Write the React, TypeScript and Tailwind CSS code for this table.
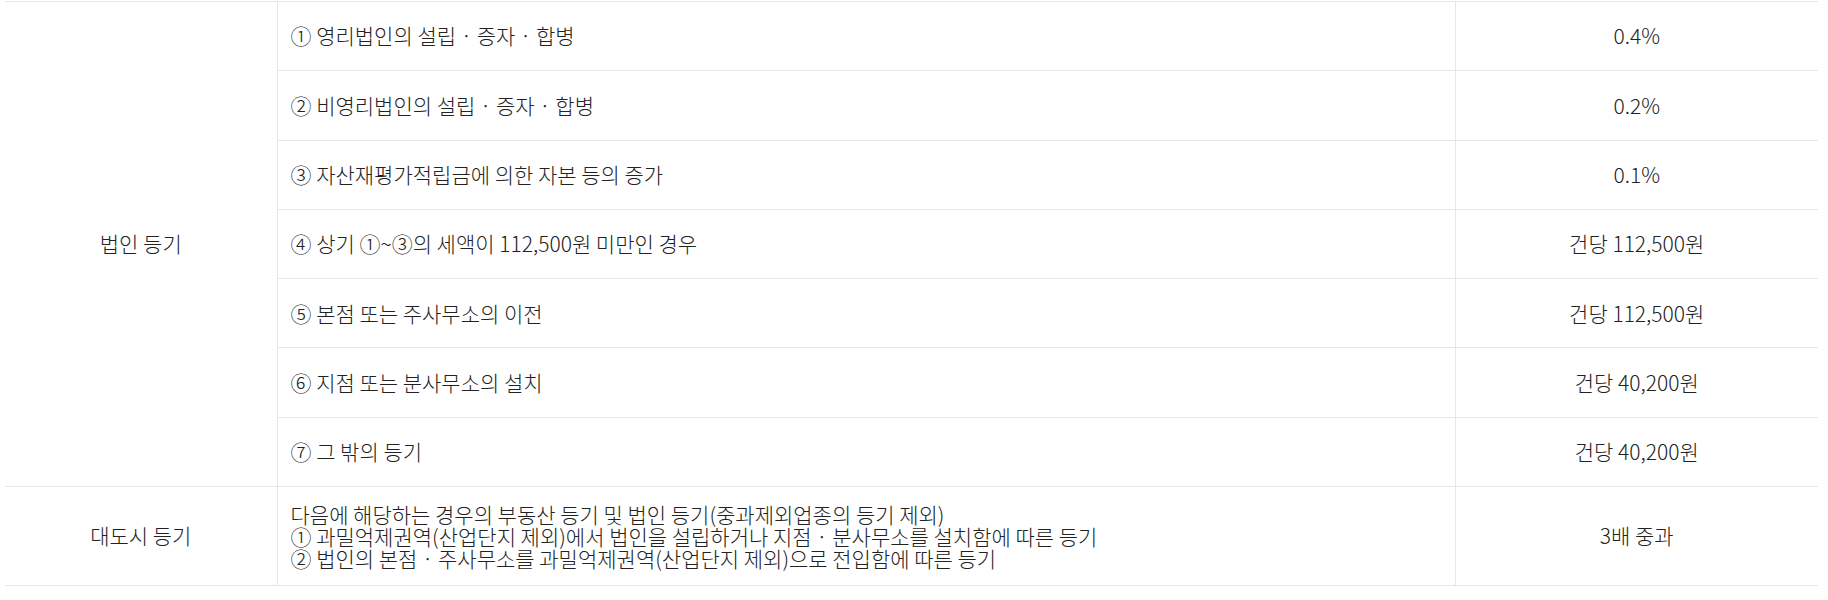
const rows = [
  { item: '① 영리법인의 설립 · 증자 · 합병', rate: '0.4%' },
  { item: '② 비영리법인의 설립 · 증자 · 합병', rate: '0.2%' },
  { item: '③ 자산재평가적립금에 의한 자본 등의 증가', rate: '0.1%' },
  { item: '④ 상기 ①~③의 세액이 112,500원 미만인 경우', rate: '건당 112,500원' },
  { item: '⑤ 본점 또는 주사무소의 이전', rate: '건당 112,500원' },
  { item: '⑥ 지점 또는 분사무소의 설치', rate: '건당 40,200원' },
  { item: '⑦ 그 밖의 등기', rate: '건당 40,200원' },
]

const cell = 'border-b border-[#e6e6e6]'

export default function App() {
  return (
    <div className="min-h-[600px] bg-white pt-px pl-[5px] font-['Noto_Sans_CJK_KR','Noto_Sans',sans-serif] text-[21px] font-light text-[#222]">
      <table className="w-[1813px] table-fixed border-collapse border-t border-[#e6e6e6]">
        <colgroup>
          <col className="w-[272px]" />
          <col className="w-[1178px]" />
          <col />
        </colgroup>
        <tbody>
          {rows.map((row, i) => (
            <tr key={i} className="h-[69.3px]">
              {i === 0 && (
                <td rowSpan={rows.length} className={`${cell} border-r text-center`}>
                  법인 등기
                </td>
              )}
              <td className={`${cell} border-r px-[13px]`}>{row.item}</td>
              <td className={`${cell} text-center`}>{row.rate}</td>
            </tr>
          ))}
          <tr className="h-[99px]">
            <td className={`${cell} border-r text-center`}>대도시 등기</td>
            <td className={`${cell} border-r px-[13px] leading-[22px]`}>
              다음에 해당하는 경우의 부동산 등기 및 법인 등기(중과제외업종의 등기 제외)
              <br />
              ① 과밀억제권역(산업단지 제외)에서 법인을 설립하거나 지점 · 분사무소를 설치함에 따른 등기
              <br />② 법인의 본점 · 주사무소를 과밀억제권역(산업단지 제외)으로 전입함에 따른 등기
            </td>
            <td className={`${cell} text-center`}>3배 중과</td>
          </tr>
        </tbody>
      </table>
    </div>
  )
}
